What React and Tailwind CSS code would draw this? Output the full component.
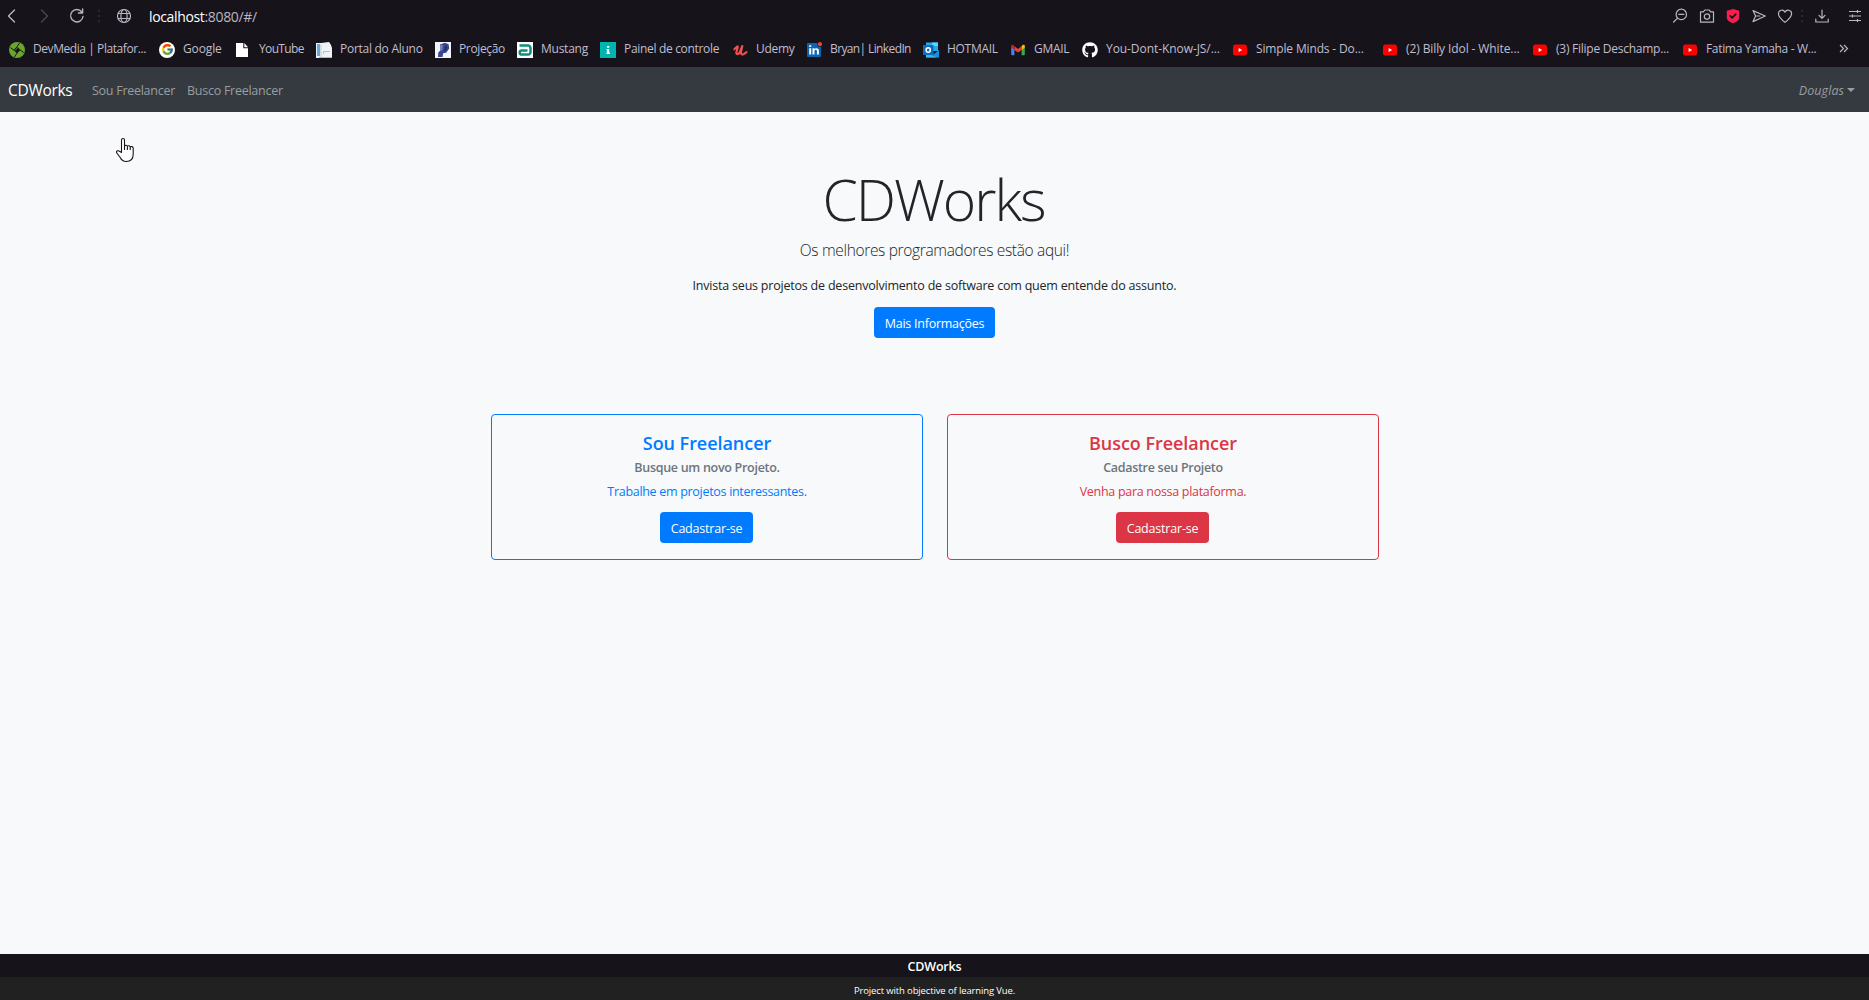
import React from 'react';
import { FcGoogle } from 'react-icons/fc';
import { FaGithub } from 'react-icons/fa';

const stroke = { fill: 'none', stroke: 'currentColor', strokeWidth: 1.2, strokeLinecap: 'round', strokeLinejoin: 'round' };

function Line({ className, children, w = 16 }) {
  return (
    <svg className={className} width={w} height="16" viewBox={`0 0 ${w} 16`} {...stroke}>
      {children}
    </svg>
  );
}

function Dots({ className }) {
  return (
    <span className={className}>
      <i className="size-0.5 bg-[#2a2830]" />
      <i className="size-0.5 bg-[#2a2830]" />
      <i className="size-0.5 bg-[#2a2830]" />
    </span>
  );
}

function DevMedia() {
  return (
    <svg width="16" height="16" viewBox="0 0 16 16">
      <circle cx="8" cy="8" r="8" fill="#6aa52e" />
      <path d="M8 4.5 11.5 8 8 11.5 4.5 8Z" fill="#16141a" />
      <path d="M8 4.800 10.500 1M11.200 8l3.500 2.500M8 11.200 5.500 15M4.800 8 1.300 5.500" stroke="#16141a" strokeWidth="1" />
      <path d="M6.2 8.2 8.6 5.8" stroke="#6aa52e" strokeWidth="1" />
    </svg>
  );
}

function Google() {
  return (
    <span className="flex size-4 items-center justify-center rounded-full bg-white">
      <FcGoogle size={13} />
    </span>
  );
}

function PageFile() {
  return (
    <svg width="16" height="16" viewBox="0 0 16 16">
      <path d="M1 1h7.300v5.200H13V15H1Z" fill="#fff" />
      <path d="M9.300 1 13 5.200H9.300Z" fill="#fff" />
    </svg>
  );
}

function Portal() {
  return (
    <svg width="16" height="16" viewBox="0 0 16 16">
      <path d="M0 1h5l8-1 2 3 1 3v10H0Z" fill="#eef3f5" />
      <path d="M1 2h3v12H1Z" fill="#6ba6dc" />
      <path d="M5 2.5V15" stroke="#b9cdd8" />
      <path d="M7.5 12V9.5H14" stroke="#b5bfc4" fill="none" />
      <path d="M3 15.5h13" stroke="#a8b9c2" />
    </svg>
  );
}

function Projecao() {
  return (
    <svg width="16" height="16" viewBox="0 0 16 16">
      <path d="M0 0h16v16H0Z" fill="#f4f5fa" />
      <path d="M5 2.5 10 .8l3.6 1.4.6 4.3-3 4.3-3 .5-.7 3.6L3 15l.3-4.5 2-2Z" fill="#38458f" />
      <path d="m5 2.5 3 1-.8 5-2 .2Z" fill="#7480bd" />
      <path d="m10.5 4 1.7.5-1 3.8-2.2.8Z" fill="#222a62" />
    </svg>
  );
}

function Mustang() {
  return (
    <svg width="16" height="16" viewBox="0 0 16 16">
      <path d="M0 0h16v16H0Z" fill="#fff" />
      <path d="M2.500 3.600h8.700a2.300 2.300 0 0 1 2.300 2.300v4.400a2.300 2.300 0 0 1-2.300 2.300H4.800a2.100 2.100 0 0 1 0-4.200h5.700" fill="none" stroke="#0d8f7b" strokeWidth="2.500" />
    </svg>
  );
}

function Painel() {
  return (
    <svg width="16" height="16" viewBox="0 0 16 16">
      <path d="M0 0h16v16H0Z" fill="#00b5b0" />
      <path d="M7 4h2.2v1.8H7ZM6.6 7h2.6v3.4h.6V12H6.4v-1.6H7V8.4h-.4Z" fill="#fff" />
    </svg>
  );
}

function Udemy() {
  return (
    <svg width="16" height="16" viewBox="0 0 16 16" fill="none" stroke="#ec5252" strokeLinecap="round" strokeLinejoin="round">
      <path d="M2.300 7.200C4.500 5 6.300 3.200 5.700 5.500L4.400 10c-.6 3 1.800 2.500 3.300.3L10.300 4 9.100 9.800c-.6 3 1.400 3.400 3.800 1.600l1.600-1.200" strokeWidth="2.100" />
    </svg>
  );
}

function LinkedIn() {
  return (
    <svg width="16" height="16" viewBox="0 0 16 16">
      <rect x="1" y="1" width="14" height="14" rx="1" fill="#0a66b5" />
      <path d="M3.200 6.200h2v6.400h-2ZM3.200 3.200h2V5h-2ZM6.500 6.200h2v.9c1-1.500 4.400-1.400 4.400 1.700v3.800h-2V9.300c0-2-2.400-1.900-2.400 0v3.300h-2Z" fill="#fff" />
      <circle cx="13.800" cy="2.200" r="2.600" fill="#16141a" />
      <circle cx="13.900" cy="2.200" r="2.100" fill="#e9453b" />
    </svg>
  );
}

function Outlook() {
  return (
    <svg width="16" height="16" viewBox="0 0 16 16">
      <path d="M3 .5h12V9H3Z" fill="#28a8ea" />
      <path d="M9 .5h6V4H9Z" fill="#50d9ff" />
      <path d="M3 8.500 11 12l5-4v7.500H3Z" fill="#1490df" />
      <path d="m3 11 11 4.500H3Z" fill="#35b8f1" />
      <rect y="3" width="10.500" height="10" rx=".6" fill="#0f6cbd" />
      <ellipse cx="5.200" cy="8" rx="2.100" ry="2.300" fill="none" stroke="#fff" strokeWidth="1.500" />
    </svg>
  );
}

function Gmail() {
  return (
    <svg width="16" height="16" viewBox="0 0 16 16">
      <path d="M1.2 4.5 4.4 7v6.2H2.2a1 1 0 0 1-1-1Z" fill="#4285f4" />
      <path d="M14.8 4.5 11.6 7v6.2h2.2a1 1 0 0 0 1-1Z" fill="#34a853" />
      <path d="M11.6 4.3v3.6l3.2-2.4V4c0-1.5-1.6-1.5-2.4-.8Z" fill="#fbbc04" />
      <path d="m4.4 4.2 3.6 2.7 3.6-2.7v3.7L8 10.6 4.4 7.9Z" fill="#ea4335" />
      <path d="M1.2 4v1.5l3.2 2.4V4.2l-.8-1C2.6 2.4 1.2 2.8 1.2 4Z" fill="#c5221f" />
    </svg>
  );
}

function Github() {
  return <FaGithub size={16} color="#fff" />;
}

function YouTube() {
  return (
    <svg width="16" height="16" viewBox="0 0 16 16">
      <rect x="1" y="2.6" width="14" height="11" rx="2.4" fill="#f00" />
      <path d="m6.6 6 3.6 2-3.6 2Z" fill="#fff" />
    </svg>
  );
}

const bookmarks = [
  [DevMedia, 'DevMedia | Platafor...', 'w-[150px]', 'tracking-[-0.43px]'],
  [Google, 'Google', 'w-[76px]', 'tracking-[-0.12px]'],
  [PageFile, 'YouTube', 'w-[81px]', 'tracking-[-0.65px]'],
  [Portal, 'Portal do Aluno', 'w-[119px]', 'tracking-[-0.27px]'],
  [Projecao, 'Projeção', 'w-[82px]', 'tracking-[-0.36px]'],
  [Mustang, 'Mustang', 'w-[83px]', 'tracking-[-0.25px]'],
  [Painel, 'Painel de controle', 'w-[132px]', 'tracking-[-0.32px]'],
  [Udemy, 'Udemy', 'w-[74px]', 'tracking-[-0.3px]'],
  [LinkedIn, 'Bryan| LinkedIn', 'w-[117px]', 'tracking-[-0.62px]'],
  [Outlook, 'HOTMAIL', 'w-[87px]', 'tracking-[-0.3px]'],
  [Gmail, 'GMAIL', 'w-[72px]', 'tracking-[-0.3px]'],
  [Github, 'You-Dont-Know-JS/...', 'w-[150px]', 'tracking-[-0.07px]'],
  [YouTube, 'Simple Minds - Do...', 'w-[150px]', 'tracking-[-0.15px]'],
  [YouTube, '(2) Billy Idol - White...', 'w-[150px]', 'tracking-[-0.1px]'],
  [YouTube, '(3) Filipe Deschamp...', 'w-[150px]', 'tracking-[-0.25px]'],
  [YouTube, 'Fatima Yamaha - W...', 'w-[150px]', 'tracking-[-0.33px]'],
];

function AddressBar() {
  return (
    <div className="flex h-8 items-center pr-1.5 pl-1 text-[#b9b5c3]">
      <Line><path d="M10.5 2 4.5 8l6 6" strokeWidth="1.4" /></Line>
      <Line className="ml-4 text-[#4c4a54]"><path d="m5.5 2 6 6-6 6" /></Line>
      <Line className="ml-[17px]"><path d="M14 8.5A6.2 6.2 0 1 1 12.8 4M13.6 1v4H9.4" strokeWidth="1.4" /></Line>
      <Dots className="ml-[13px] flex flex-col gap-[3px]" />
      <Line className="ml-4">
        <circle cx="8" cy="8" r="6.5" />
        <ellipse cx="8" cy="8" rx="3.1" ry="6.5" />
        <path d="M2.2 5.5h11.6M2.2 10.5h11.6" />
      </Line>
      <span className="ml-[17px] text-[14px] tracking-[-0.35px] whitespace-nowrap">
        <span className="text-white">localhost</span>:8080/#/
      </span>
      <Line className="mr-px ml-auto">
        <circle cx="9.3" cy="6.4" r="5.2" />
        <path d="M5.6 10.1 1.6 14M6.8 6.4h5" />
      </Line>
      <Line className="ml-2.5">
        <path d="M1.5 3.8h3L5.7 2h4.6l1.2 1.8h3v10.4h-13Z" />
        <circle cx="8" cy="8.6" r="2.7" />
      </Line>
      <Line className="ml-2.5">
        <path d="M8 1 14.200 2.800v7.200c0 2-3 4.200-6.200 5.300-3.200-1.100-6.200-3.300-6.200-5.300V2.800Z" fill="#fa1e4e" stroke="none" />
        <path d="m5.200 7.900 2 2 3.600-3.700" stroke="#16141a" strokeWidth="1.700" />
      </Line>
      <Line className="ml-2.5"><path d="M2 2.6 14.3 8 2 13.6 4.6 8ZM4.6 8h4.2" /></Line>
      <Line className="ml-2.5"><path d="M8 14.4C3.5 10.8 1.4 8.4 1.4 5.7 1.4 1.7 6.500 1 8 4.200 9.500 1 14.600 1.700 14.600 5.700c0 2.700-2.100 5.100-6.600 8.700Z" /></Line>
      <Dots className="ml-2 flex flex-col gap-[3px]" />
      <Line className="ml-[11px]"><path d="M8 2v8M5 7.300l3 3 3-3M1.800 11v3h12.400v-3" /></Line>
      <Line className="ml-[17px]"><path d="M2 3.500h12M2 8h12M2 12.500h12M10.500 2v3M5.500 6.500v3M10.500 11v3" strokeLinecap="butt" /></Line>
    </div>
  );
}

function Bookmarks() {
  return (
    <div className="flex h-[35px] items-center pl-[9px] text-[12px] text-[#c0bdd0]">
      {bookmarks.map(([Icon, label, width, tracking]) => (
        <div key={label} className={`flex shrink-0 items-center gap-2 ${width}`}>
          <span className="flex size-4 shrink-0 items-center justify-center"><Icon /></span>
          <span className={`pb-0.5 whitespace-nowrap ${tracking}`}>{label}</span>
        </div>
      ))}
      <svg className="mb-0.5 ml-[7px]" width="10" height="9" viewBox="0 0 10 9" fill="none" stroke="#b9b5c3" strokeWidth="1.200">
        <path d="m1 1 3.500 3.500L1 8M5 1l3.500 3.500L5 8" />
      </svg>
    </div>
  );
}

function NavBar() {
  return (
    <nav className="flex h-[45px] items-center bg-[#343a40] pt-[3px] pl-2 text-[12.500px] text-[#9a9da0]">
      <span className="w-[84px] text-[15.500px] tracking-[-0.300px] text-white">CDWorks</span>
      <span className="w-[95px] tracking-[-0.270px] whitespace-nowrap">Sou Freelancer</span>
      <span className="tracking-[-0.260px] whitespace-nowrap">Busco Freelancer</span>
      <span className="mr-3.5 ml-auto flex items-center gap-[3px] tracking-[0.080px] italic">
        Douglas
        <i className="mb-0.5 border-x-4 border-t-4 border-x-transparent border-t-[#9a9da0]" />
      </span>
    </nav>
  );
}

function Card({ box, title, titleColor, sub, text, button }) {
  return (
    <section className={`flex h-[146px] w-[432px] flex-col items-center rounded-[4px] border pt-4 ${box}`}>
      <h4 className={`h-6 text-[18px] leading-6 font-semibold tracking-[-0.050px] ${titleColor}`}>{title}</h4>
      <h6 className="mt-px h-6 text-[12.500px] leading-6 font-semibold tracking-[-0.290px] text-[#6c757d]">{sub}</h6>
      <p className={`h-6 text-[12.500px] leading-6 tracking-[-0.300px] ${titleColor}`}>{text}</p>
      <button className={`mt-2 mr-px h-[31px] w-[93px] rounded-[4px] pt-[3px] text-[12.500px] tracking-[-0.200px] text-white ${button}`}>Cadastrar-se</button>
    </section>
  );
}

export default function App() {
  return (
    <div className="relative flex h-screen w-full flex-col overflow-hidden bg-[#f7f9fa] font-['Open_Sans','Noto_Sans',sans-serif] text-[#212529]">
      <header className="bg-[#16141a]">
        <AddressBar />
        <Bookmarks />
      </header>
      <NavBar />
      <main className="flex flex-1 flex-col items-center">
        <h1 className="mt-[51px] mr-0.5 h-[72px] text-[57px] leading-[72px] font-light tracking-[-2px]">CDWorks</h1>
        <p className="mt-[3px] h-6 text-[15.500px] leading-6 font-light tracking-[-0.330px]">Os melhores programadores estão aqui!</p>
        <p className="mt-[14px] h-5 text-[12.500px] leading-5 tracking-[-0.210px]">Invista seus projetos de desenvolvimento de software com quem entende do assunto.</p>
        <button className="mt-[11px] h-[31px] w-[121px] rounded-[4px] bg-[#007bff] pt-[3px] text-[12.500px] tracking-[-0.260px] text-white">Mais Informações</button>
        <div className="mt-[76px] ml-px flex gap-6">
          <Card
            box="border-[#007bff]"
            title="Sou Freelancer"
            titleColor="text-[#007bff]"
            sub="Busque um novo Projeto."
            text="Trabalhe em projetos interessantes."
            button="bg-[#007bff]"
          />
          <Card
            box="border-[#dc3545]"
            title="Busco Freelancer"
            titleColor="text-[#dc3545]"
            sub="Cadastre seu Projeto"
            text="Venha para nossa plataforma."
            button="bg-[#dc3545]"
          />
        </div>
      </main>
      <footer className="text-center text-white">
        <div className="h-[23px] bg-[#16141a] text-[12.500px] leading-[25px] font-semibold tracking-[-0.200px]">CDWorks</div>
        <div className="h-[23px] bg-[#212121] text-[9.500px] leading-[27px] font-medium tracking-[-0.130px]">Project with objective of learning Vue.</div>
      </footer>
      <svg className="absolute top-[137px] left-[115px]" width="20" height="26" viewBox="0 0 20 26" fill="#fff" stroke="#16141a" strokeWidth="1.100" strokeLinejoin="round">
        <path d="M6.500 15.500V3c0-2 3-2 3 0v6c.3-1 2.700-1 2.900.3.500-.8 2.500-.7 2.800.6.600-.7 3-.5 3 1.300V17c0 5-3 7.500-7 7.500-3.300 0-4.700-1.500-6-4L1.500 15.500c-.3-1.800 2-2.300 3-1.200Z" />
        <path d="M9.500 9v4M12.400 9.500V13M15.200 10v3" fill="none" />
      </svg>
    </div>
  );
}
